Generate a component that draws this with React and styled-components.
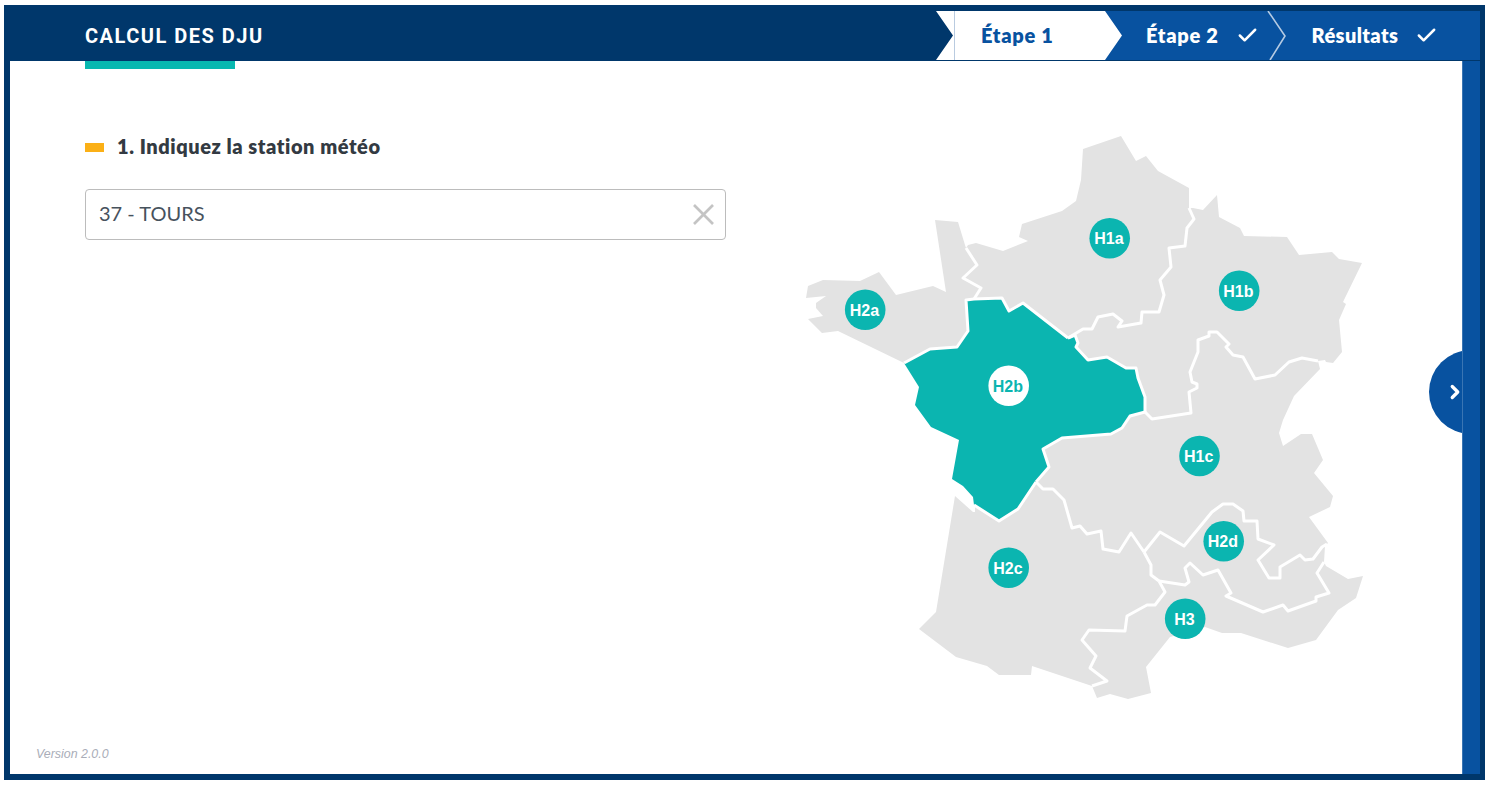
import React from 'react';
import styled, { createGlobalStyle } from 'styled-components';
import { Check, ChevronRight } from 'lucide-react';

const GlobalStyle = createGlobalStyle`
  html, body {
    margin: 0;
    padding: 0;
    background: #fff;
    overflow: hidden;
  }
`;

const Frame = styled.div`
  box-sizing: border-box;
  width: 1481px;
  height: 775px;
  margin: 5px 0 0 4px;
  display: flex;
  flex-direction: column;
  border: solid #00376b;
  border-width: 0 5px 6px 6px;
`;
const Header = styled.header`
  box-sizing: border-box;
  height: 56px;
  flex: none;
  display: flex;
  align-items: stretch;
  padding: 6px 0 1px 75px;
  background: #00376b;
`;
const Title = styled.h1`
  flex: 1;
  margin: 0;
  align-self: center;
  font: 700 20px 'Roboto', sans-serif;
  letter-spacing: 1.5px;
  color: #fff;
`;
const Stepper = styled.nav`
  width: 544px;
  display: flex;
  font: 800 20px 'Lato', sans-serif;
  letter-spacing: 0.7px;
`;
const CurrentStep = styled.div`
  position: relative;
  z-index: 1;
  box-sizing: border-box;
  width: 186px;
  flex: none;
  display: flex;
  align-items: center;
  padding: 0 0 2px 45px;
  background: #fff;
  color: #0852a0;
  clip-path: polygon(0 0, 169px 0, 186px 50%, 169px 100%, 0 100%, 17px 50%);
  &::before {
    content: '';
    position: absolute;
    left: 18px;
    top: 0;
    bottom: 0;
    width: 1px;
    background: #b9cbe0;
  }
`;
const DoneSteps = styled.div`
  flex: 1;
  margin-left: -17px;
  padding-left: 41px;
  display: flex;
  align-items: center;
  background: #0852a0;
  color: #fff;
`;
const StepLabel = styled.span`
  margin-right: 17px;
  padding-bottom: 2px;
  letter-spacing: ${p => (p.$tight ? '0.4px' : 'inherit')};
`;
const Separator = styled.svg`
  flex: none;
  width: 20px;
  height: 49px;
  margin: 0 25px 0 8px;
`;
const Body = styled.div`
  position: relative;
  flex: 1;
  min-height: 0;
  display: flex;
`;
const Content = styled.main`
  flex: 1;
  display: flex;
  background: #fff;
`;
const LeftColumn = styled.section`
  box-sizing: border-box;
  width: 790px;
  flex: none;
  display: flex;
  flex-direction: column;
  padding: 0 0 13px 26px;
`;
const Accent = styled.div`
  width: 150px;
  height: 8px;
  margin-left: 49px;
  background: #07b8b0;
`;
const Question = styled.h2`
  display: flex;
  align-items: center;
  gap: 13px;
  margin: 62px 0 0 49px;
  font: 800 20px/30px 'Lato', sans-serif;
  letter-spacing: 0.55px;
  color: #333a42;
  &::before {
    content: '';
    width: 19px;
    height: 9px;
    margin-top: 3px;
    background: #fbb016;
  }
`;
const SelectBox = styled.div`
  box-sizing: border-box;
  width: 641px;
  height: 51px;
  margin: 28px 0 0 49px;
  padding: 0 11px 0 13px;
  display: flex;
  align-items: center;
  justify-content: space-between;
  border: 1px solid #bcbcbc;
  border-radius: 4px;
  font: 400 20px 'Lato', sans-serif;
  color: #47525d;
`;
const SelectValue = styled.span`
  padding-bottom: 4px;
`;
const ClearIcon = styled.svg`
  width: 21px;
  height: 21px;
  stroke: #c4c4c4;
  stroke-width: 2.6;
`;
const Version = styled.small`
  margin-top: auto;
  font: italic 400 12.4px 'Liberation Sans', sans-serif;
  color: #a9adb8;
`;
const MapDrawing = styled.svg`
  flex: none;
  width: 570px;
  height: 575px;
  margin-top: 69px;
`;
const Region = styled.polygon`
  fill: ${p => (p.$active ? '#0bb5b0' : '#e3e3e3')};
`;
const Border = styled.polyline`
  fill: none;
  stroke: #fff;
  stroke-width: 3;
  stroke-linejoin: round;
`;
const PinDot = styled.circle`
  fill: ${p => (p.$active ? '#fff' : '#0bb5b0')};
`;
const PinLabel = styled.text`
  fill: ${p => (p.$active ? '#0bb5b0' : '#fff')};
  font: 700 16px 'Liberation Sans', sans-serif;
  text-anchor: middle;
`;
const SidePanel = styled.aside`
  width: 18px;
  flex: none;
  background: #0852a0;
  box-shadow: inset 1px 0 0 #3a75b3;
`;
const SideHandle = styled.button`
  position: absolute;
  left: 1419px;
  top: 289px;
  width: 84px;
  height: 84px;
  padding: 0;
  border: 0;
  border-radius: 50%;
  background: #0852a0;
  color: #fff;
  clip-path: inset(0 51px 0 0);
  display: flex;
  align-items: center;
  svg {
    margin-left: 15px;
  }
`;

const rev = s => s.split(' ').reverse().join(' ');

// shared borders between climate zones, in page pixels
const e1 = '966,248 977,265 963,278 981,288 974,299';
const e2 = '974,299 966,300 968,331 957,347 930,349 904,363';
const e3 = '974,299 1002,298 1009,311 1023,303 1068,338';
const e4 = '1189,208 1194,219 1187,228 1185,246 1169,248 1171,267 1160,280 1164,295 1159,312 1142,312 1141,323 1118,327 1122,321 1113,314 1098,317 1092,329 1083,329 1068,338';
const e5 = '1068,338 1075,335 1078,343 1076,347 1088,360 1107,357 1126,368 1136,368 1138,378 1145,397 1145,412';
const e6 = '1145,412 1130,416 1122,428 1111,434 1062,438 1043,449 1049,467 1036,482';
const e7 = '1036,482 1018,509 999,521 974,505';
const e8 = '1145,412 1152,419 1191,413 1189,392 1197,388 1197,384 1192,382 1190,372 1198,352 1198,340 1209,336 1209,332 1217,332 1229,344 1226,347 1233,355 1243,357 1255,379 1275,375 1289,362 1302,358 1318,361';
const e9 = '1036,482 1043,489 1053,489 1064,500 1072,528 1080,526 1087,534 1101,531 1103,549 1119,552 1131,533 1144,552';
const e10 = '1144,552 1160,532 1184,546 1212,512 1223,504 1233,504 1243,511 1244,521 1257,521 1258,539 1274,545 1258,560 1269,578 1280,578 1280,567 1300,555 1305,560 1313,559 1322,547 1327,544';
const e11 = '1144,552 1151,565 1151,575 1159,581';
const e12 = '1159,581 1185,585 1189,582 1185,568 1190,563 1203,575 1218,570 1231,593 1226,596 1263,612 1283,605 1288,611 1316,601 1316,597 1329,593 1317,573 1324,562';
const e13 = '1159,581 1165,592 1155,605 1147,605 1127,616 1125,631 1089,630 1082,640 1096,656 1090,668 1107,681 1092,686';

const regions = [
  { id: 'H1a', points: ['966,248 968,245 976,243 1003,251 1028,241 1019,237 1022,224 1062,211 1076,201 1081,180 1083,149 1121,136 1136,161 1146,156 1158,171 1189,188', e4, rev(e3), rev(e1)] },
  { id: 'H2a', points: ['904,363 838,331 822,333 808,319 823,316 816,308 816,303 826,296 806,298 808,286 823,280 860,281 879,272 896,295 933,286 946,292 935,220 958,222 965,245', e1, e2] },
  { id: 'H1b', points: ['1189,208 1193,208 1203,210 1217,195 1219,217 1240,228 1244,236 1287,237 1299,255 1332,252 1339,259 1362,263 1343,302 1346,304 1339,320 1342,352 1333,363 1326,362 1325,360 1318,361', rev(e8), rev(e5), rev(e4)] },
  { id: 'H1c', points: [e8, '1320,369 1294,396 1283,420 1279,433 1283,446 1301,434 1312,434 1323,460 1314,473 1333,496 1330,507 1309,517 1328,543', rev(e10), rev(e9), rev(e6)] },
  { id: 'H2c', points: [e9, e11, e13, '1032,666 1031,675 999,675 987,666 956,657 919,629 936,612 955,496 973,512 975,512 975,505', rev(e7)] },
  { id: 'H2d', points: [e10, '1325,546', rev(e12), rev(e11)] },
  { id: 'H3', points: [e12, '1326,566 1348,579 1363,576 1356,598 1338,610 1316,640 1288,648 1241,633 1222,633 1205,627 1170,637 1146,667 1151,693 1128,699 1110,694 1097,698', rev(e13)] },
  { id: 'H2b', active: true, points: [e3, e5, e6, e7, '973,497 963,486 952,479 959,440 931,427 915,405 919,387', rev(e2)] },
];

const borders = [e1, e2, e3, e4, e5, e6, e7, e8, e9, e10, e11, e12, e13];

const pins = [
  { id: 'H1a', x: 1109.7, y: 238.2 },
  { id: 'H1b', x: 1239.2, y: 290.8 },
  { id: 'H2a', x: 865.2, y: 309.8 },
  { id: 'H2b', x: 1008.7, y: 385.8, active: true },
  { id: 'H1c', x: 1199.5, y: 456 },
  { id: 'H2d', x: 1223.7, y: 541.3 },
  { id: 'H2c', x: 1008.7, y: 567.7 },
  { id: 'H3', x: 1185.2, y: 618.8 },
];

const FranceMap = () => (
  <MapDrawing viewBox="800 130 570 575">
    {regions.map(r => (
      <Region key={r.id} $active={r.active} points={r.points.join(' ')} />
    ))}
    {borders.map(b => (
      <Border key={b} points={b} />
    ))}
    {pins.map(p => (
      <g key={p.id}>
        <PinDot $active={p.active} cx={p.x} cy={p.y} r="20.3" />
        <PinLabel $active={p.active} x={p.x - 0.8} y={p.y + 6}>
          {p.id}
        </PinLabel>
      </g>
    ))}
  </MapDrawing>
);

const App = () => (
  <>
    <GlobalStyle />
    <Frame>
      <Header>
        <Title>CALCUL DES DJU</Title>
        <Stepper>
          <CurrentStep>Étape 1</CurrentStep>
          <DoneSteps>
            <StepLabel>Étape 2</StepLabel>
            <Check size={23} strokeWidth={2.6} />
            <Separator viewBox="0 0 20 49">
              <polyline points="1,0 18,25 3,49" fill="none" stroke="#b5cbe3" strokeWidth="1.6" />
            </Separator>
            <StepLabel $tight>Résultats</StepLabel>
            <Check size={23} strokeWidth={2.6} />
          </DoneSteps>
        </Stepper>
      </Header>
      <Body>
        <Content>
          <LeftColumn>
            <Accent />
            <Question>1. Indiquez la station météo</Question>
            <SelectBox>
              <SelectValue>37 - TOURS</SelectValue>
              <ClearIcon viewBox="0 0 21 21">
                <line x1="1" y1="1" x2="20" y2="20" />
                <line x1="20" y1="1" x2="1" y2="20" />
              </ClearIcon>
            </SelectBox>
            <Version>Version 2.0.0</Version>
          </LeftColumn>
          <FranceMap />
        </Content>
        <SidePanel />
        <SideHandle aria-label="Suivant">
          <ChevronRight size={22} strokeWidth={3.6} />
        </SideHandle>
      </Body>
    </Frame>
  </>
);

export default App;
